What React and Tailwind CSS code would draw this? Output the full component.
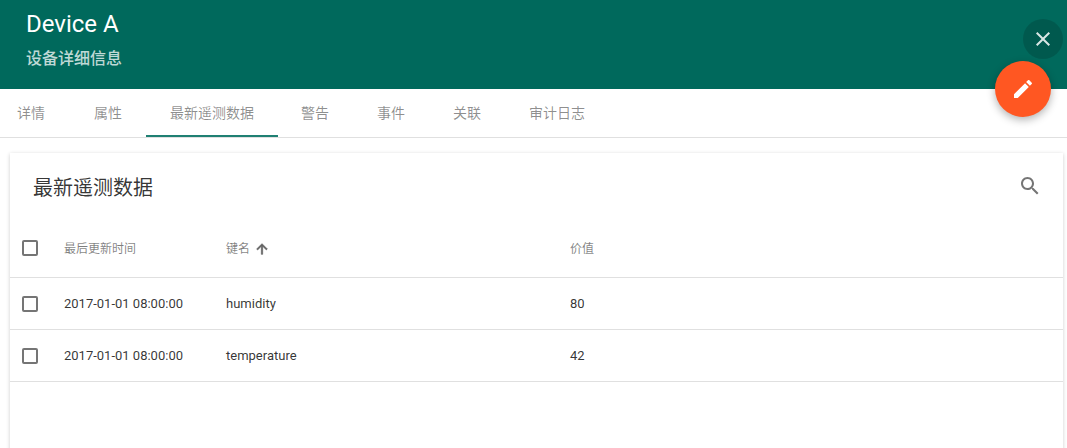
const FONT = "font-['Roboto','Noto_Sans_CJK_SC',sans-serif]";

const tabs = [
  { label: '详情', className: 'pl-[17px] pr-[25px]' },
  { label: '属性', className: 'px-6' },
  { label: '最新遥测数据', className: 'px-6 -mr-px', active: true },
  { label: '警告', className: 'px-6' },
  { label: '事件', className: 'px-6' },
  { label: '关联', className: 'px-6' },
  { label: '审计日志', className: 'px-6' },
];

const rows = [
  { time: '2017-01-01 08:00:00', key: 'humidity', value: '80' },
  { time: '2017-01-01 08:00:00', key: 'temperature', value: '42' },
];

// Material icon paths
const Icon = ({ d, size = 24, className = '', ...rest }) => (
  <svg width={size} height={size} viewBox="0 0 24 24" fill="currentColor" className={className} {...rest}>
    <path d={d} />
  </svg>
);

const ICONS = {
  close: 'M19 6.41L17.59 5 12 10.59 6.41 5 5 6.41 10.59 12 5 17.59 6.41 19 12 13.41 17.59 19 19 17.59 13.41 12z',
  edit: 'M3 17.25V21h3.75L17.81 9.94l-3.75-3.75L3 17.25zM20.71 7.04c.39-.39.39-1.02 0-1.41l-2.34-2.34c-.39-.39-1.02-.39-1.41 0l-1.83 1.83 3.75 3.75 1.83-1.83z',
  search: 'M15.5 14h-.79l-.28-.27C15.41 12.59 16 11.11 16 9.5 16 5.91 13.09 3 9.5 3S3 5.91 3 9.5 5.91 16 9.5 16c1.61 0 3.09-.59 4.23-1.57l.27.28v.79l5 4.99L20.49 19l-4.99-5zm-6 0C7.01 14 5 11.99 5 9.5S7.01 5 9.5 5 14 7.01 14 9.5 11.99 14 9.5 14z',
  arrowUp: 'M4 12l1.41 1.41L11 7.83V20h2V7.83l5.58 5.59L20 12l-8-8-8 8z',
};

const Checkbox = ({ className = '' }) => (
  <div className={`size-4 shrink-0 rounded-[2px] border-2 border-[#757575] ${className}`} />
);

const App = () => {
  return (
    <div className={`relative h-[448px] w-[1067px] overflow-hidden bg-white ${FONT}`}>
      {/* Header */}
      <header className="h-[89px] bg-[#00695c] pl-[26px] text-white">
        <h1 className="pt-[7px] text-2xl leading-[34px]">Device A</h1>
        <p className="mt-[6px] text-base leading-6 font-medium text-white/75">设备详细信息</p>
      </header>

      {/* Tabs */}
      <nav className="flex h-[49px] border-b border-[#e0e0e0]">
        {tabs.map((tab) => (
          <div
            key={tab.label}
            className={`flex h-12 items-center border-b-2 pt-px text-sm text-black/45 ${tab.className} ${
              tab.active ? 'border-[#1f8073]' : 'border-transparent'
            }`}
          >
            {tab.label}
          </div>
        ))}
      </nav>

      {/* Card */}
      <section className="mt-[15px] ml-[10px] h-[400px] w-[1053px] bg-white shadow-[0_1px_4px_rgba(0,0,0,0.2)]">
        <div className="flex h-[70px] items-center justify-between pr-[21px] pl-[23px]">
          <h2 className="text-xl text-black/80">最新遥测数据</h2>
          <Icon d={ICONS.search} className="mb-1 text-[#757575]" />
        </div>

        <div className="flex h-[55px] items-center border-b border-[#e0e0e0] pb-[2px] pl-3 text-xs text-black/50">
          <Checkbox className="mb-[2px]" />
          <div className="w-[188px] pl-[26px]">最后更新时间</div>
          <div className="flex w-[344px] items-center gap-1">
            键名
            <Icon d={ICONS.arrowUp} size={16} stroke="currentColor" strokeWidth={1} className="text-[#616161]" />
          </div>
          <div>价值</div>
        </div>

        {rows.map((row) => (
          <div
            key={row.key}
            className="flex h-[52px] items-center border-b border-[#e0e0e0] pl-3 text-[13px] text-black/80"
          >
            <Checkbox />
            <div className="w-[188px] pl-[26px]">{row.time}</div>
            <div className="w-[344px]">{row.key}</div>
            <div>{row.value}</div>
          </div>
        ))}
      </section>

      {/* Close button */}
      <button className="absolute top-[19px] left-[1023px] flex size-10 items-center justify-center rounded-full bg-black/15 text-white/85">
        <Icon d={ICONS.close} />
      </button>

      {/* Edit FAB */}
      <button className="absolute top-[61px] left-[995px] flex size-14 items-center justify-center rounded-full bg-[#ff5722] text-white shadow-[0_3px_8px_rgba(0,0,0,0.3)]">
        <Icon d={ICONS.edit} />
      </button>
    </div>
  );
};

export default App;
